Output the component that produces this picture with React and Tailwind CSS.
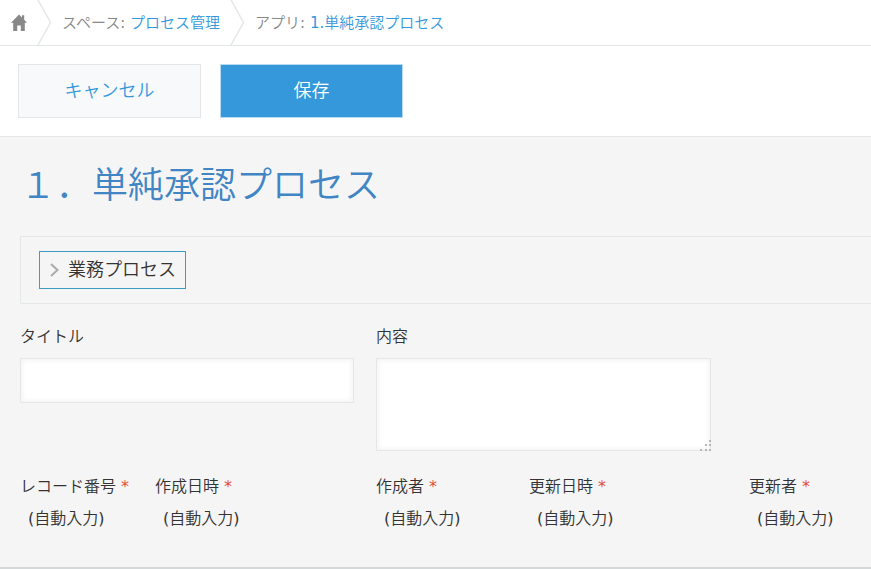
import { useState } from 'react';

const autoFields = [
  { label: 'レコード番号', className: 'w-[135px]' },
  { label: '作成日時', className: 'w-[221px]' },
  { label: '作成者', className: 'w-[153px]' },
  { label: '更新日時', className: 'w-[220px]' },
  { label: '更新者', className: 'w-[122px]' }
];

const fieldClass =
  'block w-full border border-[#e3e7e8] bg-white px-2 text-base leading-6 text-[#333] shadow-[inset_2px_2px_4px_#f5f5f5,inset_-2px_-2px_4px_#f5f5f5] outline-none focus:border-[#3498db]';

function HomeIcon() {
  return (
    <svg width="16" height="17" viewBox="0 0 16 17" fill="#888" aria-hidden="true">
      <path d="M8 .5 11 3.5V1.2h2.2v4.6L16 8.8H13.8V17H9.8V11.5H6.2V17H2.2V8.8H0Z" />
    </svg>
  );
}

function Separator() {
  return (
    <svg className="shrink-0" width="15" height="45" viewBox="0 0 15 45" fill="none" stroke="#e3e7e8" strokeWidth="1.5" aria-hidden="true">
      <path d="M1 0 13.5 22.5 1 45" />
    </svg>
  );
}

function Breadcrumb() {
  return (
    <nav className="flex h-[46px] items-center border-b border-[#e3e7e8] bg-white text-[15px] leading-6 whitespace-nowrap text-[#888]">
      <a href="#home" aria-label="ホーム" className="pr-[10px] pl-[11px]">
        <HomeIcon />
      </a>
      <Separator />
      <span className="pr-[10px] pl-[10px]">
        スペース:{' '}
        <a href="#space" className="text-[#3498db] hover:underline">
          プロセス管理
        </a>
      </span>
      <Separator />
      <span className="pl-[10px]">
        アプリ:{' '}
        <a href="#app" className="text-[#3498db] hover:underline">
          1.単純承認プロセス
        </a>
      </span>
    </nav>
  );
}

export default function App() {
  const [isOpen, setIsOpen] = useState(false);
  const [title, setTitle] = useState('');
  const [content, setContent] = useState('');

  return (
    <div className="overflow-x-hidden bg-white font-['DejaVu_Sans','Noto_Sans_CJK_JP_DemiLight','Noto_Sans_CJK_JP',sans-serif] text-[#333]">
      <Breadcrumb />

      <div className="flex gap-[19px] border-b border-[#e3e7e8] px-[18px] py-[18px]">
        <button type="button" className="h-[54px] w-[183px] border border-[#e3e7e8] bg-[#f7f9fa] text-lg text-[#3498db]">
          キャンセル
        </button>
        <button type="submit" form="record-form" className="h-[54px] w-[183px] border border-[#b9dcf3] bg-[#3498db] text-lg text-white">
          保存
        </button>
      </div>

      <form id="record-form" className="border-b-2 border-[#d5d8d8] bg-[#f5f5f5] pb-9 pl-5" onSubmit={(event) => event.preventDefault()}>
        <h1 className="pt-[25px] text-4xl leading-[48px] text-[#4285c5]">{'\uFF11\uFF0E'}単純承認プロセス</h1>

        <div className="mt-[26px] border border-r-0 border-[#e3e7e8] px-[18px] py-[14px]">
          <button
            type="button"
            aria-expanded={isOpen}
            onClick={() => setIsOpen((currentValue) => !currentValue)}
            className="flex h-[38px] items-center gap-2 border border-[#3d9cc4] px-[9px] text-lg"
          >
            <svg width="11" height="14" viewBox="0 0 11 14" fill="none" stroke="#aaa" strokeWidth="2" aria-hidden="true">
              <path d="M2 1 8.5 7 2 13" />
            </svg>
            業務プロセス
          </button>
        </div>

        <div className="mt-[21px] flex gap-[22px]">
          <div className="w-[334px]">
            <label htmlFor="title" className="block pb-[9px] text-base leading-6">
              タイトル
            </label>
            <input id="title" type="text" value={title} onChange={(event) => setTitle(event.target.value)} className={`${fieldClass} h-[45px]`} />
          </div>
          <div className="w-[335px]">
            <label htmlFor="content" className="block pb-[9px] text-base leading-6">
              内容
            </label>
            <div className="relative">
              <textarea
                id="content"
                value={content}
                onChange={(event) => setContent(event.target.value)}
                className={`${fieldClass} h-[93px] resize-none`}
              />
              <svg className="pointer-events-none absolute right-0 bottom-0" width="11" height="11" viewBox="0 0 11 11" fill="#b5b8b8" aria-hidden="true">
                <path d="M9 0h2v2H9zM9 4h2v2H9zM5 4h2v2H5zM9 9h2v2H9zM5 9h2v2H5zM0 9h2v2H0z" />
              </svg>
            </div>
          </div>
        </div>

        <dl className="mt-6 flex text-base whitespace-nowrap">
          {autoFields.map((field) => (
            <div key={field.label} className={`${field.className} shrink-0`}>
              <dt className="leading-6">
                {field.label} <span className="text-[#e74c3c]">*</span>
              </dt>
              <dd className="pt-2 pl-2 leading-6">(自動入力)</dd>
            </div>
          ))}
        </dl>
      </form>
    </div>
  );
}
